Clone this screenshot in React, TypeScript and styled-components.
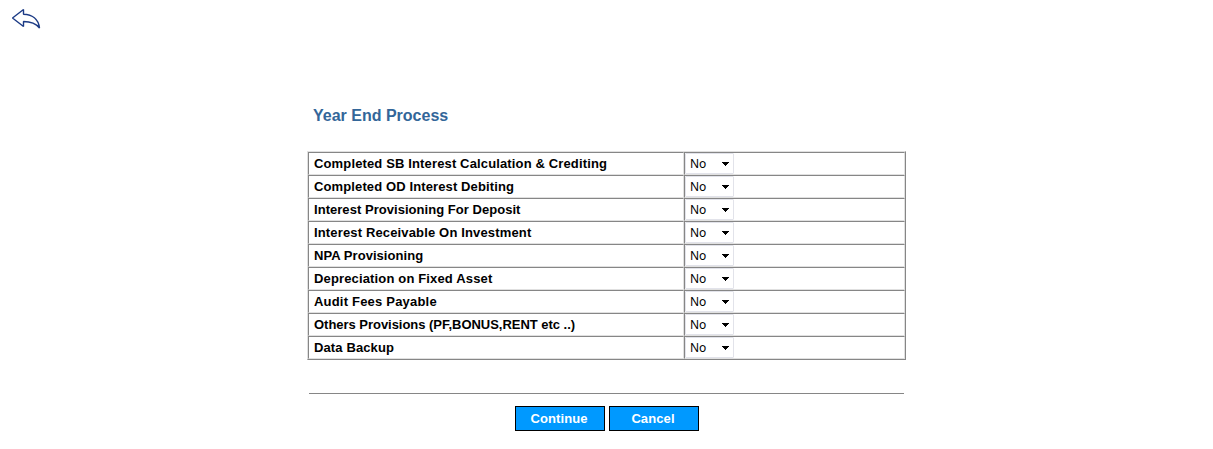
import React from 'react';
import styled, { createGlobalStyle } from 'styled-components';

const GlobalStyle = createGlobalStyle`
  body {
    margin: 0;
    background: #fff;
    font-family: "Liberation Sans", Arial, sans-serif;
    color: #000;
  }
`;

const Page = styled.div`
  height: 449px;
  overflow: hidden;
  display: flex;
  flex-direction: column;
`;

const Header = styled.header`
  height: 106px;
  flex: none;
`;

const BackIcon = styled.svg`
  display: block;
  margin: 8px 0 0 11px;
`;

const Panel = styled.main`
  width: 599px;
  margin-left: 307px;
`;

const Title = styled.h1`
  margin: 0 0 25px 6px;
  font-size: 16px;
  line-height: 20px;
  font-weight: bold;
  color: #336699;
`;

const Grid = styled.div`
  border: 1px solid;
  border-color: #e0e0e0 #868686 #868686 #e0e0e0;
`;

const Row = styled.div`
  display: grid;
  grid-template-columns: 376px 221px;
  height: 23px;
`;

const Cell = styled.div`
  border: 1px solid;
  border-color: #868686 #e0e0e0 #e0e0e0 #868686;
  display: flex;
  align-items: center;
`;

const Label = styled.span<{ $spacing: number }>`
  padding-left: 5px;
  font-size: 13px;
  line-height: 21px;
  font-weight: bold;
  white-space: nowrap;
  letter-spacing: ${(p) => p.$spacing}px;
`;

const Select = styled.div`
  box-sizing: border-box;
  width: 49px;
  height: 21px;
  border: 1px solid #e2e3ea;
  border-radius: 1px;
  padding: 0 4px;
  display: flex;
  align-items: center;
  justify-content: space-between;
  font-family: "Noto Sans", sans-serif;
  font-size: 12px;
  line-height: 19px;
`;

const Divider = styled.div`
  height: 1px;
  margin: 33px 2px 12px;
  background: #868686;
`;

const Actions = styled.div`
  display: flex;
  gap: 4px;
  padding-left: 208px;
`;

const Button = styled.button`
  box-sizing: border-box;
  width: 90px;
  height: 25px;
  padding: 0 2px 0 0;
  border: 1px solid #000;
  background: #0099ff;
  color: #fff;
  font: bold 13px "Liberation Sans", Arial, sans-serif;
  letter-spacing: 0.1px;
`;

const rows = [
  { label: 'Completed SB Interest Calculation & Crediting', spacing: 0.14 },
  { label: 'Completed OD Interest Debiting', spacing: 0.12 },
  { label: 'Interest Provisioning For Deposit', spacing: 0.04 },
  { label: 'Interest Receivable On Investment', spacing: 0.15 },
  { label: 'NPA Provisioning', spacing: 0.05 },
  { label: 'Depreciation on Fixed Asset', spacing: 0.15 },
  { label: 'Audit Fees Payable', spacing: 0.2 },
  { label: 'Others Provisions (PF,BONUS,RENT etc ..)', spacing: -0.03 },
  { label: 'Data Backup', spacing: 0.12 },
];

export default function App() {
  return (
    <>
      <GlobalStyle />
      <Page>
        <Header>
          <BackIcon width="31" height="23" viewBox="0 0 31 23" fill="none" stroke="#1b3a85" strokeWidth="1.4" strokeLinejoin="bevel">
            <path d="M1.5 10 L12.5 1.5 V6.2 C21 6.5 27.5 11 28.5 20 C25 15.5 20.5 13.5 12.5 13.5 V18.5 Z" />
          </BackIcon>
        </Header>
        <Panel>
          <Title>Year End Process</Title>
          <Grid>
            {rows.map((row) => (
              <Row key={row.label}>
                <Cell>
                  <Label $spacing={row.spacing}>{row.label}</Label>
                </Cell>
                <Cell>
                  <Select>
                    No
                    <svg width="7" height="4" viewBox="0 0 7 4" shapeRendering="crispEdges">
                      <path d="M0 0H7V1H6V2H5V3H4V4H3V3H2V2H1V1H0Z" />
                    </svg>
                  </Select>
                </Cell>
              </Row>
            ))}
          </Grid>
          <Divider />
          <Actions>
            <Button type="button">Continue</Button>
            <Button type="button">Cancel</Button>
          </Actions>
        </Panel>
      </Page>
    </>
  );
}
